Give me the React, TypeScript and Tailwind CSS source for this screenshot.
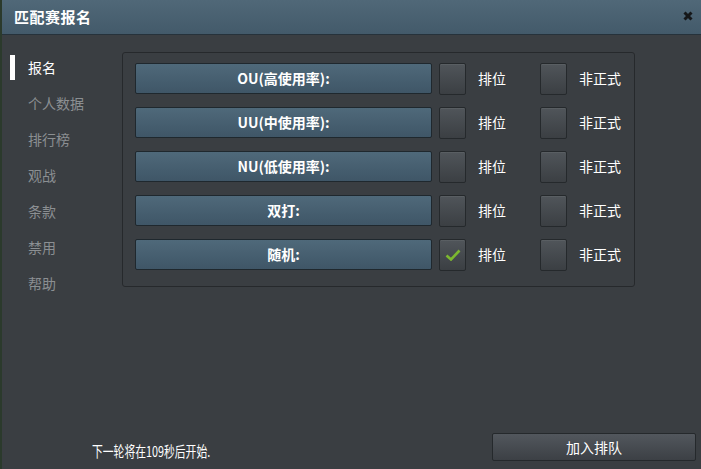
import React from 'react';

const rows = [
  { label: 'OU(高使用率):', ranked: false },
  { label: 'UU(中使用率):', ranked: false },
  { label: 'NU(低使用率):', ranked: false },
  { label: '双打:', ranked: false },
  { label: '随机:', ranked: true },
];

const menu = ['报名', '个人数据', '排行榜', '观战', '条款', '禁用', '帮助'];

const Check = ({ checked }: { checked: boolean }) => (
  <div className="w-[27px] h-[32px] rounded-[2px] border border-[#25292c] bg-gradient-to-b from-[#50555a] to-[#3b3f43] shadow-[inset_0_1px_0_rgba(255,255,255,0.06)] flex items-center justify-center">
    {checked && (
      <svg width="16" height="12" viewBox="0 0 16 12">
        <path d="M1.5 6.5 L6 10.5 L14.5 1.5" fill="none" stroke="#7cb82f" strokeWidth="2.6" />
      </svg>
    )}
  </div>
);

const App = () => {
  return (
    <div className="w-[701px] h-[469px] flex flex-col bg-[#3a3e42] text-white overflow-hidden border-l-2 border-[#2b3a2c] font-['Noto_Sans_CJK_SC','Noto_Sans',sans-serif]">
      <div className="h-[35px] shrink-0 flex items-center justify-between pl-[12px] pr-[8px] bg-gradient-to-b from-[#506878] to-[#435a6a] border-b border-[#26323b]">
        <span className="text-[15px] font-bold tracking-[0.5px]">匹配赛报名</span>
        <svg width="10" height="10" viewBox="0 0 10 10" className="mb-[2px]">
          <path d="M1.5 1.5 L8.5 8.5 M8.5 1.5 L1.5 8.5" stroke="#151719" strokeWidth="3" />
        </svg>
      </div>
      <div className="flex flex-1">
        <div className="w-[120px] shrink-0 pt-[14px] flex flex-col">
          {menu.map((m, i) => (
            <div key={m} className="h-[36px] flex items-center">
              <div className={`w-[5px] h-[25px] ml-[8px] mr-[13px] ${i === 0 ? 'bg-white' : ''}`} />
              <span className={`text-[14px] ${i === 0 ? 'text-white' : 'text-[#8b8f92]'}`}>{m}</span>
            </div>
          ))}
        </div>
        <div className="pt-[17px]">
          <div className="w-[513px] h-[235px] rounded-[3px] border border-[#26292c] pl-[12px] pt-[10px] flex flex-col gap-[13px]">
            {rows.map(r => (
              <div key={r.label} className="flex items-center h-[31px]">
                <div className="w-[297px] h-[31px] rounded-[2px] border border-[#1f282e] bg-gradient-to-b from-[#4f697a] to-[#3f5667] flex items-center justify-center text-[14px] font-bold">
                  {r.label}
                </div>
                <div className="ml-[7px]"><Check checked={r.ranked} /></div>
                <span className="ml-[12px] w-[50px] text-[14px]">排位</span>
                <div className="ml-[12px]"><Check checked={false} /></div>
                <span className="ml-[12px] text-[14px]">非正式</span>
              </div>
            ))}
          </div>
        </div>
      </div>
      <div className="h-[36px] shrink-0 flex items-start">
        <div className="w-[490px] pl-[90px] pt-[5px]">
          <span className="inline-block origin-left scale-x-[0.72] text-[15px] whitespace-nowrap">下一轮将在109秒后开始.</span>
        </div>
        <div className="w-[204px] h-[28px] rounded-[2px] border border-[#25292c] bg-gradient-to-b from-[#52575d] to-[#3c4045] flex items-center justify-center text-[14px]">
          加入排队
        </div>
      </div>
    </div>
  );
};

export default App;
